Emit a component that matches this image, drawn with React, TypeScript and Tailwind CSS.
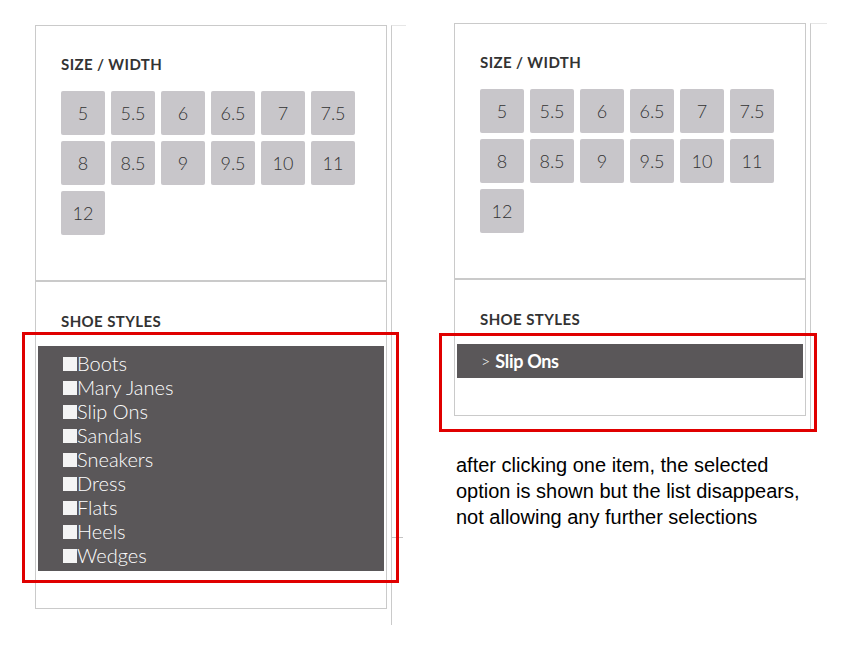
import React from "react";

const sizes = ["5", "5.5", "6", "6.5", "7", "7.5", "8", "8.5", "9", "9.5", "10", "11", "12"];
const styles = ["Boots", "Mary Janes", "Slip Ons", "Sandals", "Sneakers", "Dress", "Flats", "Heels", "Wedges"];

function SizeSection() {
  return (
    <div className="h-[254px] pt-[28px] pl-[25px]">
      <h3 className="text-[15px] leading-[20px] font-bold text-[#333] tracking-[0.4px]">SIZE / WIDTH</h3>
      <div className="mt-[17px] grid grid-cols-[repeat(6,44px)] gap-[6px]">
        {sizes.map((s) => (
          <div
            key={s}
            className="h-[44px] rounded-[2px] bg-[#c8c6ca] flex items-center justify-center text-[18px] font-light text-[#333]"
          >
            {s}
          </div>
        ))}
      </div>
    </div>
  );
}

function Panel({ children }: { children: React.ReactNode }) {
  return (
    <div className="w-[352px] border border-[#cacaca] bg-white font-['Lato',sans-serif]">
      <SizeSection />
      <div className="h-[2px] bg-[#cacaca]" />
      <div className="pt-[29px] pb-[37px]">
        <h3 className="pl-[25px] text-[15px] leading-[20px] font-bold text-[#333] tracking-[0.4px]">SHOE STYLES</h3>
        <div className="mt-[15px] mx-[2px]">{children}</div>
      </div>
    </div>
  );
}

export default function App() {
  return (
    <div className="relative w-[850px] h-[650px] bg-white flex items-start overflow-hidden">
      {/* left: open list */}
      <div className="ml-[35px] mt-[25px] flex items-start">
        <Panel>
          <div className="bg-[#5a5759] pt-[5px] pb-[4px] pl-[25px]">
            {styles.map((s) => (
              <div key={s} className="text-[20px] leading-[24px] font-light text-white">
                <span className="inline-block w-[14px] h-[14px] bg-[#f4f4f4] align-baseline" />
                {s}
              </div>
            ))}
          </div>
        </Panel>
        <div className="relative ml-[4px] w-[15px] h-[600px] border-l border-t border-l-[#cacaca] border-t-[#e6e6e6]">
          <div className="absolute left-0 top-[511px] w-[11px] h-px bg-[#c4c4c4]" />
        </div>
      </div>

      {/* right: after selecting */}
      <div className="ml-[48px] mt-[23px] flex flex-col">
        <div className="flex items-start">
          <Panel>
            <div className="h-[34px] bg-[#5a5759] pl-[24px] flex items-center text-white">
              <span className="text-[16px] font-light mr-[5px]">&gt;</span>
              <span className="text-[18px] font-bold tracking-[-0.3px]">Slip Ons</span>
            </div>
          </Panel>
          <div className="ml-[4px] w-[17px] h-[407px] border-l border-t border-l-[#cacaca] border-t-[#e6e6e6]" />
        </div>
        <p className="mt-[22px] ml-[2px] font-['Liberation_Sans',Arial,sans-serif] text-[20px] leading-[26px] text-black">
          after clicking one item, the selected
          <br />
          option is shown but the list disappears,
          <br />
          not allowing any further selections
        </p>
      </div>

      {/* annotation boxes */}
      <div className="absolute left-[22px] top-[332px] w-[377px] h-[251px] border-[3px] border-[#e00000]" />
      <div className="absolute left-[439px] top-[333px] w-[378px] h-[99px] border-[3px] border-[#e00000]" />
    </div>
  );
}
